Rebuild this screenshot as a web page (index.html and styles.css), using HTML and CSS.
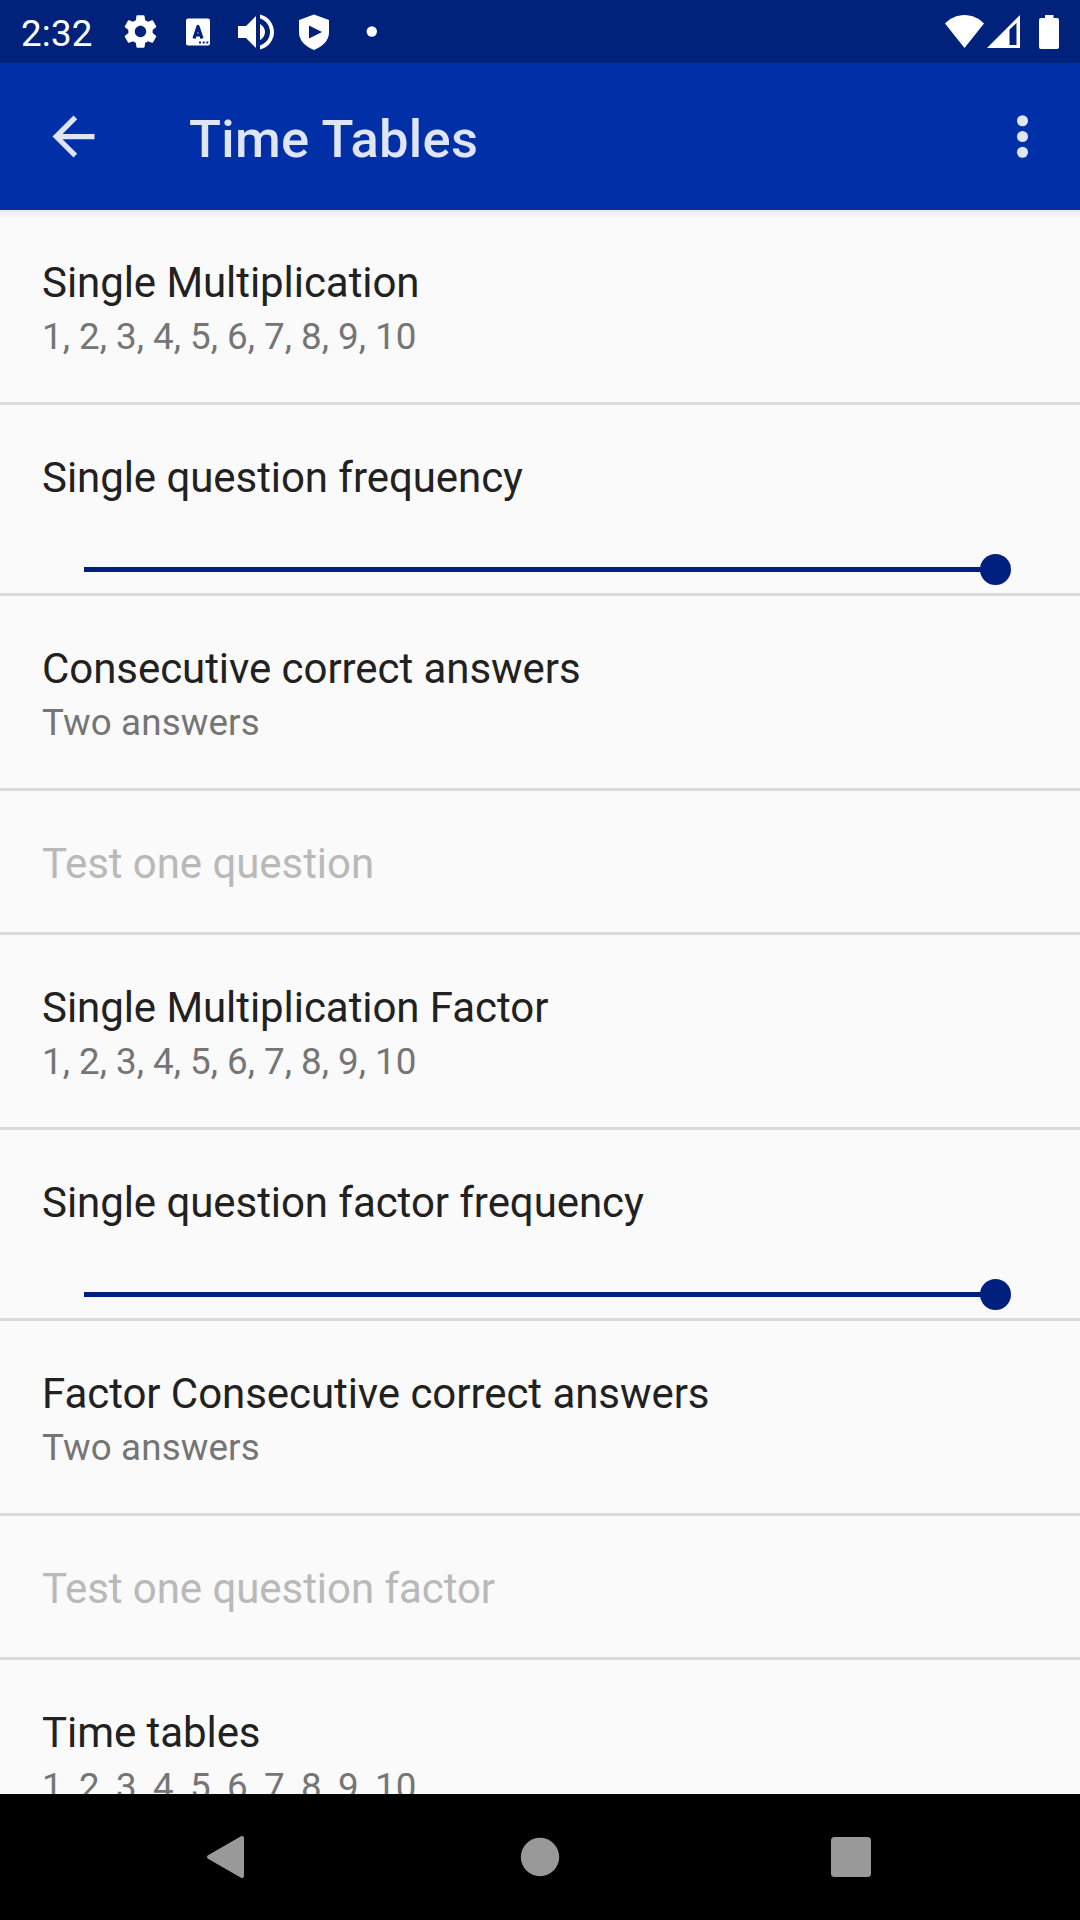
FILE: index.html
```html
<!DOCTYPE html>
<html lang="en">
<head>
<meta charset="utf-8">
<title>Time Tables</title>
<link rel="stylesheet" href="styles.css">
</head>
<body>
<div class="screen">
  <div class="status-bar">
    <span class="clock">2:32</span>
    <div class="notifications">
      <svg class="icon-small" viewBox="0 0 24 24"><path d="M19.43 12.98c.04-.32.07-.64.07-.98s-.03-.66-.07-.98l2.11-1.65c.19-.15.24-.42.12-.64l-2-3.46c-.12-.22-.39-.3-.61-.22l-2.49 1c-.52-.4-1.08-.73-1.69-.98l-.38-2.65C14.46 2.18 14.25 2 14 2h-4c-.25 0-.46.18-.49.42l-.38 2.65c-.61.25-1.17.59-1.69.98l-2.49-1c-.23-.09-.49 0-.61.22l-2 3.46c-.13.22-.07.49.12.64l2.11 1.65c-.04.32-.07.65-.07.98s.03.66.07.98l-2.11 1.65c-.19.15-.24.42-.12.64l2 3.46c.12.22.39.3.61.22l2.49-1c.52.4 1.08.73 1.69.98l.38 2.65c.03.24.24.42.49.42h4c.25 0 .46-.18.49-.42l.38-2.65c.61-.25 1.17-.59 1.69-.98l2.49 1c.23.09.49 0 .61-.22l2-3.46c.12-.22.07-.49-.12-.64l-2.11-1.65zM12 15.5c-1.93 0-3.500-1.570-3.500-3.500s1.570-3.500 3.500-3.500 3.500 1.570 3.500 3.500-1.570 3.500-3.500 3.500z"/></svg>
      <svg class="icon" viewBox="0 0 48 48"><rect x="12" y="10.500" width="24" height="27" rx="2"/><path class="cutout" d="M20 30.500l4-12 4 12M21.500 27h5"/><path class="cutout-dots" d="M25 34.500h2M28.700 34.500h2M32.300 34.500h2"/></svg>
      <svg class="icon" viewBox="0 0 24 24"><path d="M3 9v6h4l5 5V4L7 9H3zm13.500 3c0-1.770-1.020-3.290-2.500-4.030v8.050c1.480-.730 2.500-2.250 2.500-4.020zM14 3.230v2.060c2.890.860 5 3.540 5 6.710s-2.110 5.850-5 6.710v2.060c4.010-.910 7-4.490 7-8.770s-2.990-7.860-7-8.770z"/></svg>
      <svg class="icon" viewBox="0 0 48 48"><path fill-rule="evenodd" d="M24 6.500l15 5.500v12.500c0 8-6.500 14-15 17.500-8.500-3.500-15-9.500-15-17.500V12zM19 17.500v13l13-6.500z"/></svg>
      <svg class="icon" viewBox="0 0 48 48"><circle cx="23.800" cy="23.500" r="5.200"/></svg>
    </div>
    <div class="system-icons">
      <svg class="wifi" viewBox="0 0 39 33"><path d="M19.500 33L0 8.500C5 3.500 11.500 0 19.500 0S34 3.500 39 8.500z"/></svg>
      <svg class="signal" viewBox="0 0 33 33"><path fill-rule="evenodd" d="M33 0v33H0zM22.500 14.500V30H29.500V8z"/></svg>
      <svg class="battery" viewBox="0 0 20 34"><path d="M6 0h8.500v3H18q2 0 2 2v27q0 2-2 2H2q-2 0-2-2V5q0-2 2-2h4z"/></svg>
    </div>
  </div>
  <div class="app-bar">
    <svg class="action" viewBox="0 0 24 24"><path d="M20 11H7.830l5.590-5.590L12 4l-8 8 8 8 1.410-1.410L7.830 13H20v-2z"/></svg>
    <h1 class="heading">Time Tables</h1>
    <svg class="action" viewBox="0 0 24 24"><circle cx="12" cy="6" r="2.100"/><circle cx="12" cy="12" r="2.100"/><circle cx="12" cy="18" r="2.100"/></svg>
  </div>
  <div class="list">
    <div class="row"><div class="title">Single Multiplication</div><div class="summary">1, 2, 3, 4, 5, 6, 7, 8, 9, 10</div></div>
    <div class="row row-slider"><div class="title">Single question frequency</div><div class="slider"><div class="thumb"></div></div></div>
    <div class="row"><div class="title">Consecutive correct answers</div><div class="summary summary-words">Two answers</div></div>
    <div class="row row-single disabled"><div class="title">Test one question</div></div>
    <div class="row"><div class="title">Single Multiplication Factor</div><div class="summary">1, 2, 3, 4, 5, 6, 7, 8, 9, 10</div></div>
    <div class="row row-slider"><div class="title">Single question factor frequency</div><div class="slider"><div class="thumb"></div></div></div>
    <div class="row"><div class="title">Factor Consecutive correct answers</div><div class="summary summary-words">Two answers</div></div>
    <div class="row row-single disabled"><div class="title">Test one question factor</div></div>
    <div class="row"><div class="title">Time tables</div><div class="summary">1, 2, 3, 4, 5, 6, 7, 8, 9, 10</div></div>
  </div>
  <div class="nav-bar">
    <svg class="nav-icon" viewBox="0 0 48 48"><path class="rounded" d="M4 24L37 5V43z"/></svg>
    <svg class="nav-icon" viewBox="0 0 48 48"><circle cx="24" cy="24" r="19.200"/></svg>
    <svg class="nav-icon" viewBox="0 0 48 48"><rect x="4" y="4" width="40" height="40" rx="3.500"/></svg>
  </div>
</div>
</body>
</html>
```

FILE: styles.css
```css
* {
  box-sizing: border-box;
}

body {
  margin: 0;
  font-family: Roboto, sans-serif;
  background: #fafafa;
}

svg {
  display: block;
  flex: none;
  fill: currentColor;
}

.screen {
  display: flex;
  flex-direction: column;
  width: 1080px;
  height: 1920px;
  overflow: hidden;
}

.status-bar {
  display: flex;
  flex: none;
  align-items: center;
  height: 63px;
  padding: 0 21px;
  color: #fff;
  background: #00227b;
}

.clock {
  width: 95px;
  padding-top: 3px;
  font-size: 36.75px;
  line-height: 43px;
  letter-spacing: 0.2px;
}

.notifications {
  display: flex;
  align-items: center;
  gap: 10px;
}

.icon {
  width: 48px;
  height: 48px;
}

.icon-small {
  width: 39px;
  height: 39px;
  margin: 0 4.5px;
}

.cutout,
.cutout-dots {
  fill: none;
  stroke: #00227b;
  stroke-width: 3.2;
  stroke-linejoin: round;
}

.cutout-dots {
  stroke-width: 2;
}

.system-icons {
  display: flex;
  align-items: center;
  margin-left: auto;
}

.wifi {
  width: 39px;
  height: 33px;
}

.signal {
  width: 33px;
  height: 33px;
  margin-left: 3px;
}

.battery {
  width: 20px;
  height: 34px;
  margin-left: 19px;
}

.app-bar {
  display: flex;
  flex: none;
  align-items: center;
  height: 147px;
  padding: 0 26px 0 42px;
  color: #dfe5f4;
  background: #002fa7;
}

.action {
  width: 63px;
  height: 63px;
}

.heading {
  flex: 1;
  margin: 0 0 0 84px;
  padding-top: 4px;
  font-size: 52.5px;
  font-weight: 500;
  line-height: 62px;
  letter-spacing: 0.3px;
}

.list {
  flex: 1;
  min-height: 0;
  overflow: hidden;
  background: linear-gradient(#e6e6ea, #f2f2f4 4px, #fafafa 9px);
}

.row {
  height: 195px;
  padding: 48px 42px 0;
  border-bottom: 3px solid #dbdbdb;
}

.row-slider {
  height: 191px;
}

.row-single {
  height: 144px;
}

.title {
  font-size: 42px;
  line-height: 49px;
  letter-spacing: -0.06px;
  color: #212121;
}

.summary {
  margin-top: 8px;
  font-size: 36.75px;
  line-height: 43px;
  color: #757575;
}

.summary-words {
  letter-spacing: 0.13px;
}

.disabled .title {
  color: #b9b9b9;
}

.slider {
  display: flex;
  align-items: center;
  justify-content: flex-end;
  height: 5px;
  margin: 65px 27px 0 42px;
  background: linear-gradient(to right, #00207f 911px, transparent 911px);
}

.thumb {
  flex: none;
  width: 31px;
  height: 31px;
  border-radius: 50%;
  background: #00207f;
}

.nav-bar {
  display: flex;
  flex: none;
  align-items: center;
  justify-content: center;
  gap: 263px;
  height: 126px;
  color: #999;
  background: #000;
}

.nav-icon {
  width: 48px;
  height: 48px;
}

/* The outline rounds off the corners of the back arrow. */
.rounded {
  stroke: currentColor;
  stroke-width: 4;
  stroke-linejoin: round;
}
```
